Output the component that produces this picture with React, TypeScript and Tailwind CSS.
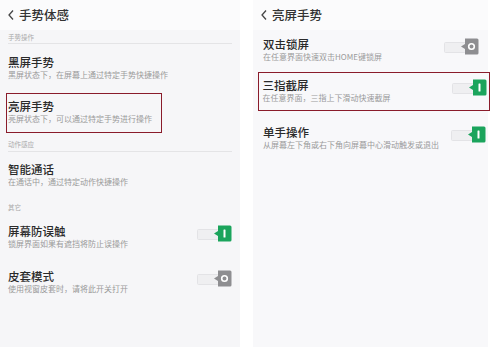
import React from "react";

const font = { fontFamily: '"Noto Sans CJK SC", "Noto Sans", sans-serif' };

function Toggle({ on }: { on: boolean }) {
    return (
        <svg width="35" height="17" viewBox="0 0 35 17" className="shrink-0">
            <rect x="0.5" y="4.5" width="21" height="10" rx="1" fill="#efeff1" stroke="#e3e3e6" />
            <path
                d="M21 0.5 H33 Q34.5 0.5 34.5 2 V15 Q34.5 16.5 33 16.5 H21 V11 L17 8.5 L21 6 Z"
                fill={on ? "#1ba45c" : "#8e8e91"}
            />
            {on ? (
                <rect x="26.5" y="4.5" width="2" height="8" rx="0.5" fill="#ffffff" />
            ) : (
                <circle cx="27.5" cy="8.5" r="2.8" fill="none" stroke="#ffffff" strokeWidth="1.6" />
            )}
        </svg>
    );
}

function Back() {
    return (
        <svg width="8" height="12" viewBox="0 0 8 12" className="shrink-0">
            <polyline points="6,1.5 2,6 6,10.5" fill="none" stroke="#444" strokeWidth="1.3" />
        </svg>
    );
}

function Header({ title }: { title: string }) {
    return (
        <div className="h-[30px] flex items-center gap-[4px] pl-[7px] bg-[#fbfbfc]">
            <Back />
            <span className="text-[12.5px] leading-[14px] text-[#333] font-medium">{title}</span>
        </div>
    );
}

function Label({ text, cls }: { text: string; cls: string }) {
    return (
        <div className={`mx-[8px] flex items-end text-[6.5px] leading-[8px] text-[#aaa] ${cls}`}>
            {text}
        </div>
    );
}

interface IItem {
    title: string;
    sub: string;
    toggle?: "on" | "off";
    cls?: string;
}

function Item({ title, sub, toggle, cls }: IItem) {
    return (
        <div className={`flex items-start ${cls ?? ""}`}>
            <div className="flex-1 min-w-0">
                <div className="text-[11.5px] leading-[13px] text-[#2a2a2a] font-medium whitespace-nowrap">{title}</div>
                <div className="mt-[1px] text-[8px] leading-[10px] text-[#9a9a9a] whitespace-nowrap">{sub}</div>
            </div>
            {toggle && <Toggle on={toggle === "on"} />}
        </div>
    );
}

export default function App() {
    return (
        <div className="w-[492px] h-[347px] bg-white flex overflow-hidden" style={font}>
            {/* left phone */}
            <div className="w-[240px] h-full bg-[#f6f6f8] flex flex-col">
                <Header title="手势体感" />
                <Label text="手势操作" cls="h-[14px] pb-[2px] border-b border-[#e4e4e6]" />
                <Item title="黑屏手势" sub="黑屏状态下，在屏幕上通过特定手势快捷操作" cls="h-[49px] pt-[12px] pl-[8px]" />
                <div className="ml-[6px] w-[156px] h-[40px] border-[1.5px] border-[#8a1c2b] pt-[6px] pl-[1px]">
                    <Item title="亮屏手势" sub="亮屏状态下，可以通过特定手势进行操作" />
                </div>
                <Label text="动作感应" cls="h-[19px] pb-[3px] border-b border-[#e4e4e6]" />
                <Item title="智能通话" sub="在通话中，通过特定动作快捷操作" cls="h-[43px] pt-[11px] pl-[8px]" />
                <Label text="其它" cls="h-[17px] pb-[1px]" />
                <Item title="屏幕防误触" sub="锁屏界面如果有遮挡将防止误操作" toggle="on" cls="h-[46px] pt-[13px] pl-[8px] pr-[8px]" />
                <Item title="皮套模式" sub="使用视窗皮套时，请将此开关打开" toggle="off" cls="h-[42px] pt-[12px] pl-[8px] pr-[8px]" />
            </div>

            <div className="w-[13px] h-full bg-white" />

            {/* right phone */}
            <div className="w-[235px] h-full bg-[#f8f8fa] flex flex-col">
                <Header title="亮屏手势" />
                <Item title="双击锁屏" sub="在任意界面快速双击HOME键锁屏" toggle="off" cls="h-[42px] pt-[8px] pl-[10px] pr-[9px]" />
                <div className="ml-[5px] w-[232px] h-[39px] border-[1.5px] border-[#8a1c2b] pt-[6px] pl-[3.5px] pr-[2px] bg-[#f8f8fa] relative z-10">
                    <Item title="三指截屏" sub="在任意界面，三指上下滑动快速截屏" toggle="on" />
                </div>
                <Item title="单手操作" sub="从屏幕左下角或右下角向屏幕中心滑动触发或退出" toggle="on" cls="h-[50px] pt-[15px] pl-[10px] pr-[2px]" />
            </div>
        </div>
    );
}
